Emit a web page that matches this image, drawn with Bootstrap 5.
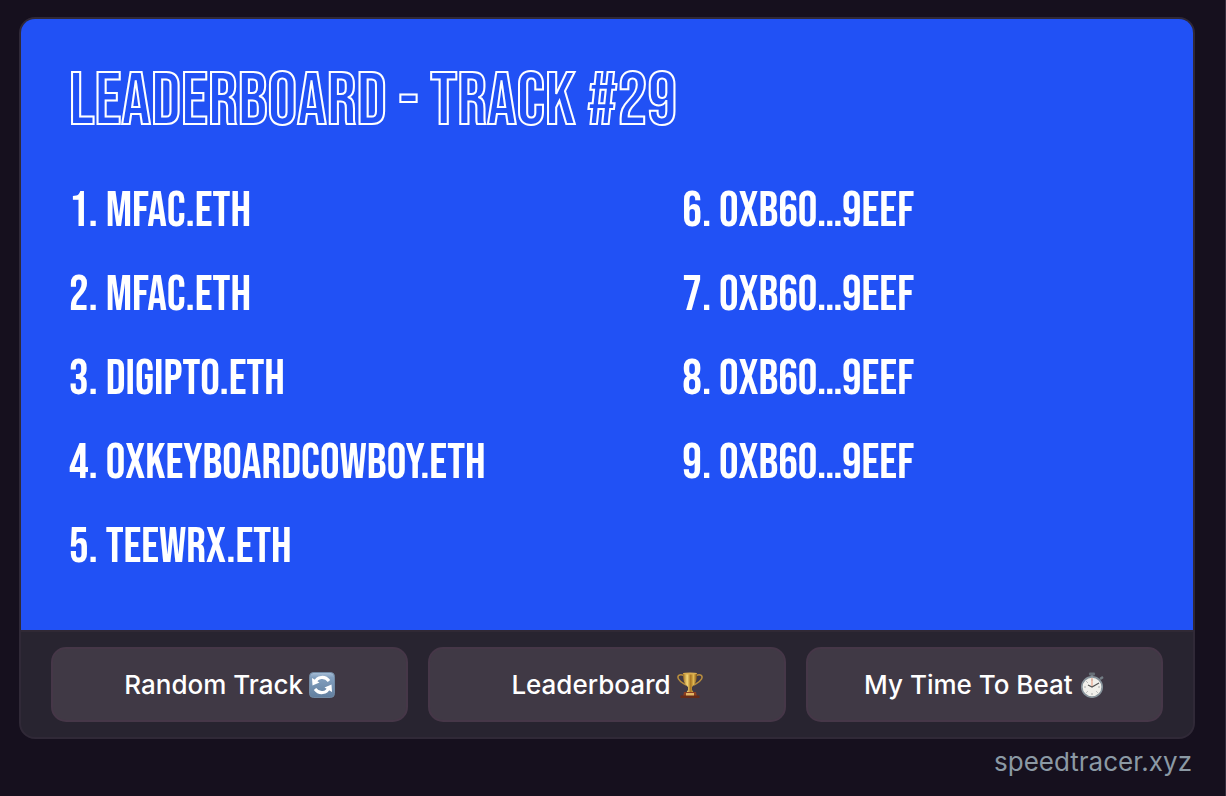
<!DOCTYPE html>
<html lang="en">
<head>
<meta charset="utf-8">
<meta name="viewport" content="width=device-width, initial-scale=1">
<title>Speedtracer leaderboard</title>
<link rel="stylesheet" href="https://cdn.jsdelivr.net/npm/bootstrap@5.3.0/dist/css/bootstrap.min.css">
<style>
  body { background: #16101e; font-family: Inter, "Liberation Sans", sans-serif; }
  .page-shell { padding: 17px 30px 0 19px; border-right: 1px solid #352d3d; }
  .frame-card { border: 2px solid #302937; border-radius: 16px; background: #282430; overflow: hidden; }
  .board { background: #2151f5; color: #fff; padding: 41px 48px 40px; font-family: "Bebas Neue", "Liberation Sans Narrow", "Liberation Sans", sans-serif; font-weight: 400; }
  .board-title { font-size: 74px; line-height: 84px; font-weight: 400; margin: 0 0 26px; white-space: nowrap; color: transparent; -webkit-text-stroke: 2px #fff; }
  .board-ranks { flex: 0 0 57%; font-size: 49px; line-height: 84px; white-space: nowrap; }
  .frame-actions { border-top: 2px solid #302935; padding: 15px 30px; gap: 20px; }
  .action-btn { --bs-btn-color: #fff; --bs-btn-bg: #403945; --bs-btn-border-color: #463748; --bs-btn-hover-color: #fff; --bs-btn-hover-bg: #4a4250; --bs-btn-hover-border-color: #463748; --bs-btn-border-width: 2px; --bs-btn-border-radius: 15px; --bs-btn-font-weight: 450; flex: 1 1 0; height: 75px; font-size: 26px; line-height: 36px; gap: 6px; }
  .action-btn svg { width: 26px; height: 26px; }
  .site-link { color: #8b99a4; font-size: 26px; line-height: 36px; margin: 5px 3px 0 0; }
</style>
<script src="https://cdn.jsdelivr.net/npm/bootstrap@5.3.0/dist/js/bootstrap.bundle.min.js"></script>
</head>
<body>
<div class="page-shell min-vh-100">
  <main class="frame-card">
    <section class="board">
      <h1 class="board-title">LEADERBOARD - TRACK #29</h1>
      <div class="d-flex">
        <div class="board-ranks">
          <div>1. MFAC.ETH</div>
          <div>2. MFAC.ETH</div>
          <div>3. DIGIPTO.ETH</div>
          <div>4. 0XKEYBOARDCOWBOY.ETH</div>
          <div>5. TEEWRX.ETH</div>
        </div>
        <div class="board-ranks">
          <div>6. 0XB60…9EEF</div>
          <div>7. 0XB60…9EEF</div>
          <div>8. 0XB60…9EEF</div>
          <div>9. 0XB60…9EEF</div>
        </div>
      </div>
    </section>
    <div class="frame-actions d-flex">
      <button type="button" class="btn action-btn d-flex align-items-center justify-content-center">Random Track
        <svg viewBox="0 0 26 26" aria-hidden="true">
          <defs><linearGradient id="tile" x2="0" y2="1"><stop stop-color="#a9c0d8"/><stop offset=".2" stop-color="#829fbe"/><stop offset="1" stop-color="#627f9f"/></linearGradient></defs>
          <rect x=".5" y=".5" width="25" height="25" rx="4" fill="url(#tile)" stroke="#7189a3"/>
          <path d="M6 10.500C8 4.500 16 3.500 20 9M20 15.500C18 21.500 10 22.500 6 17" fill="none" stroke="#fff" stroke-width="3"/>
          <path d="M3 6l.5 7.500 7-3zM23 20l-.5-7.500-7 3z" fill="#fff"/>
        </svg>
      </button>
      <button type="button" class="btn action-btn d-flex align-items-center justify-content-center">Leaderboard
        <svg viewBox="0 0 26 26" aria-hidden="true">
          <defs><linearGradient id="gold"><stop stop-color="#9b6b1d"/><stop offset=".3" stop-color="#f6d878"/><stop offset=".55" stop-color="#a87420"/><stop offset=".75" stop-color="#dfb64f"/><stop offset="1" stop-color="#7d5015"/></linearGradient></defs>
          <path d="M7 3.500C2 1.500 0 4 1.500 7S6 11 9 13M19 3.500c5-2 7 .5 5.500 3.500S20 11 17 13" fill="none" stroke="#b88d3e" stroke-width="1.600"/>
          <path d="M6 1h14c0 7-1 11-5 14v3l2 3H9l2-3v-3C7 12 6 8 6 1z" fill="url(#gold)"/>
          <ellipse cx="13" cy="1.500" rx="7" ry="1" fill="#d9ad50"/>
          <path d="M7 20h12l1 5H6z" fill="#8b3f20"/>
          <path d="M9 21h8v3H9z" fill="#e2b565"/>
          <path d="M3.500 23.500h19V26h-19z" fill="#652b18"/>
        </svg>
      </button>
      <button type="button" class="btn action-btn d-flex align-items-center justify-content-center">My Time To Beat
        <svg viewBox="0 0 26 26" aria-hidden="true">
          <rect x="10" y=".5" width="6" height="3" rx="1" fill="#676f77"/>
          <path d="M13 3v3M21 7l3-2" stroke="#737d85" stroke-width="2.500"/>
          <circle cx="13" cy="15" r="10.200" fill="#f1f0eb" stroke="#87939b" stroke-width="1.700"/>
          <path d="M13 7v2M13 21v2M5 15h2M19 15h2M7.300 9.300l1.400 1.400M17.300 19.300l1.400 1.400M7.300 20.700l1.400-1.400" stroke="#aaa" stroke-width="1"/>
          <path d="M13 15V6" stroke="#e9a58d" stroke-width="1.200"/>
          <path d="M9 13l4 2 7-4" fill="none" stroke="#555" stroke-width="1.200"/>
        </svg>
      </button>
    </div>
  </main>
  <footer class="d-flex justify-content-end"><a href="#" class="site-link text-decoration-none">speedtracer.xyz</a></footer>
</div>
</body>
</html>
